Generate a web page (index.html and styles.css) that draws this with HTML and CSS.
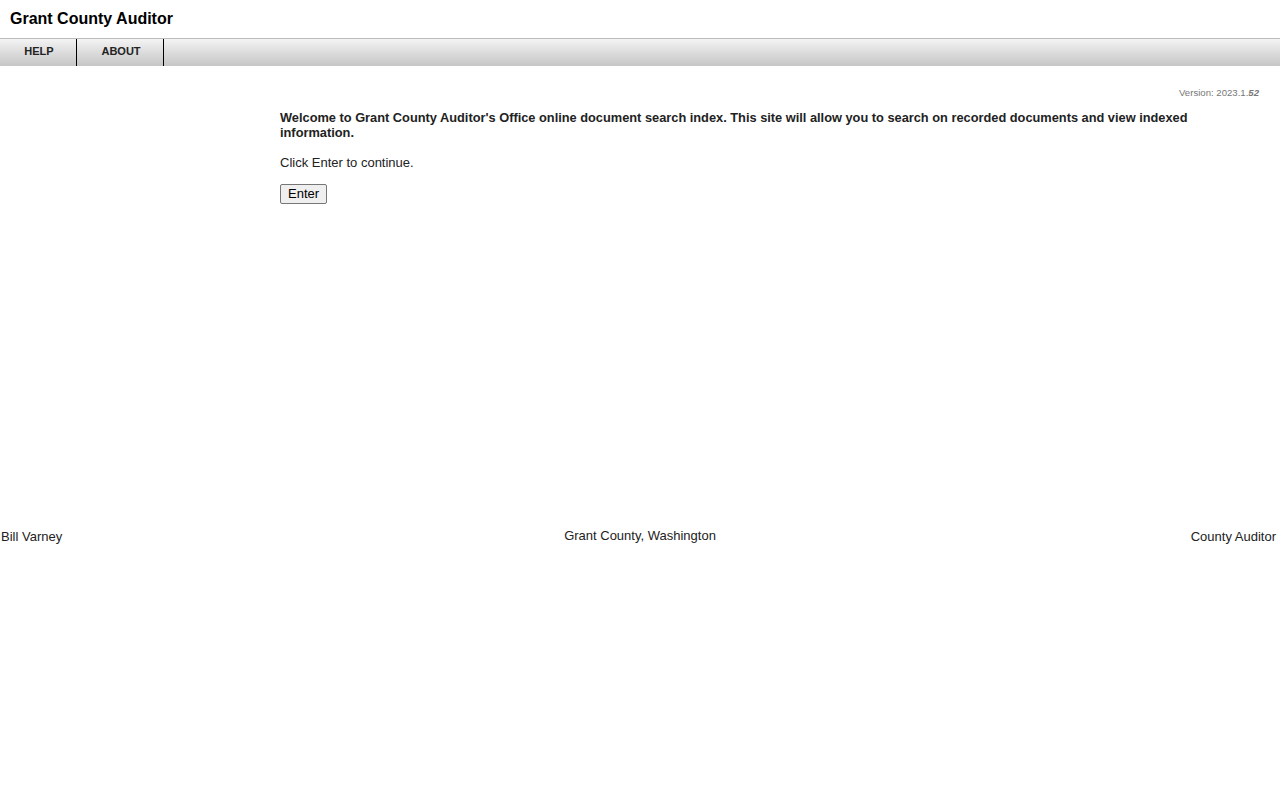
FILE: index.html
```html
<!DOCTYPE html>
<html>
<head>
<meta charset="utf-8">
<link rel="stylesheet" href="styles.css">
</head>
<body>
<div class="header"><h1 class="title">Grant County Auditor</h1></div>
<nav class="nav">
  <a class="nav-item nav-help">HELP</a>
  <a class="nav-item nav-about">ABOUT</a>
</nav>
<div class="version">Version: 2023.1.<b><i>52</i></b></div>
<main class="main">
  <p class="welcome">Welcome to Grant County Auditor's Office online document search index. This site will allow you to search on recorded documents and view indexed information.</p>
  <p class="click">Click Enter to continue.</p>
  <button class="enter">Enter</button>
</main>
<footer class="footer">
  <div class="f-left">Bill Varney</div>
  <div class="f-center">Grant County, Washington</div>
  <div class="f-right">County Auditor</div>
</footer>
</body>
</html>
```
FILE: styles.css
```css
html, body { margin: 0; padding: 0; background: #fff; }
body { font-family: "Liberation Sans", Arial, sans-serif; color: #222; }
.header { height: 38px; display: flex; align-items: center; padding-left: 10px; }
.title { margin: 0; font-size: 16px; font-weight: bold; color: #000; }
.nav { display: flex; height: 27px; border-top: 1px solid #bcbcbc; background: linear-gradient(#f4f4f4, #dcdcdc 50%, #c6c6c6); }
.nav-item { display: flex; align-items: flex-start; padding-top: 6px; box-sizing: border-box; justify-content: center; font-size: 11px; font-weight: bold; color: #222; border-right: 1px solid #000; height: 100%; }
.nav-help { width: 77px; padding-left: 2px; }
.nav-about { width: 87px; padding-left: 2px; }
.version { text-align: right; font-size: 9.6px; color: #777; padding: 21px 21px 0 0; line-height: 12px; }
.main { padding-left: 280px; padding-right: 60px; margin-top: 11px; height: 418px; }
.welcome { margin: 0; font-size: 12.8px; font-weight: bold; line-height: 15px; color: #222; }
.click { margin: 15px 0 0; font-size: 13px; line-height: 16px; }
.enter { margin-top: 13px; font-family: "Liberation Sans", Arial, sans-serif; font-size: 13px; padding: 1px 7px; height: 20px; line-height: 16px; border: 1px solid #767676; border-radius: 2px; background: #efefef; color: #000; }
.footer { display: grid; grid-template-columns: 1fr auto 1fr; align-items: start; font-size: 13px; padding: 0 4px 0 1px; }
.f-left { margin-top: 1px; justify-self: start; }
.f-center { justify-self: center; margin-left: 3px; }
.f-right { margin-top: 1px; justify-self: end; }
```
